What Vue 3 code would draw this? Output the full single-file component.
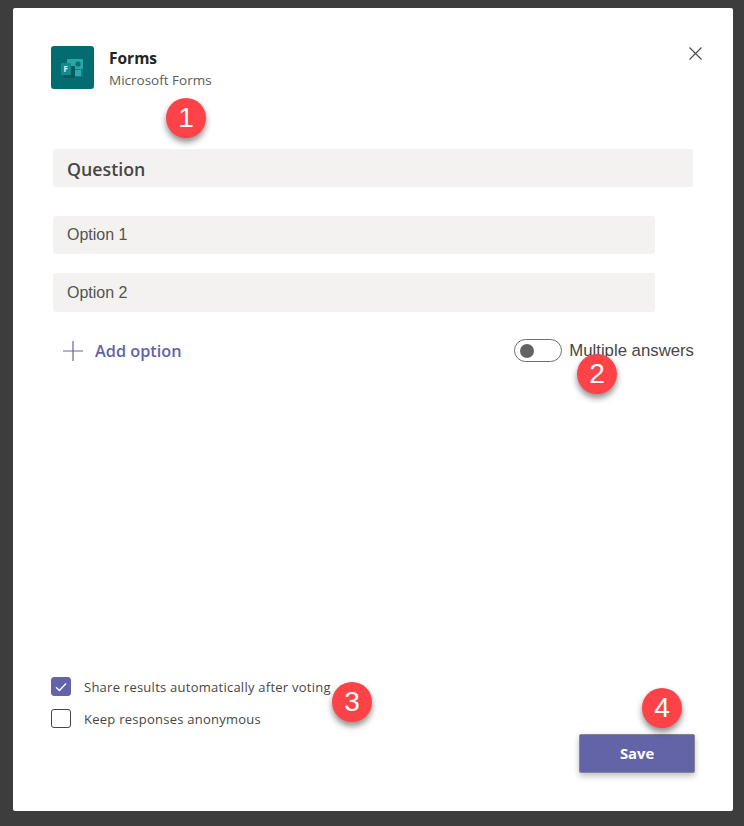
<template>
  <div class="page">
    <div class="dialog">
      <header class="head">
        <div class="app-icon">
          <svg width="43" height="43" viewBox="0 0 43 43">
            <rect x="16" y="13" width="16" height="18" rx="1" fill="#0b7f82" />
            <rect x="16" y="13" width="16" height="10" rx="1" fill="#28a6aa" />
            <circle cx="27" cy="18" r="2.6" fill="#0b6f72" />
            <rect x="24" y="24" width="6" height="6" fill="#2fa8ab" />
            <rect x="13" y="20" width="11" height="12" rx="1" fill="#07595c" />
            <rect x="10" y="17" width="10" height="12" rx="1" fill="#148a8d" />
            <text x="12.4" y="26" class="icon-letter">F</text>
          </svg>
        </div>
        <div class="titles">
          <div class="title">Forms</div>
          <div class="subtitle">Microsoft Forms</div>
        </div>
        <svg class="close" width="15" height="15" viewBox="0 0 15 15">
          <path d="M1.5 1.5 13.5 13.5M13.5 1.5 1.5 13.5" stroke="#4a4a4a" stroke-width="1.1" fill="none" />
        </svg>
      </header>

      <div class="field question">Question</div>
      <div class="field option first">Option 1</div>
      <div class="field option second">Option 2</div>

      <div class="tools">
        <div class="add">
          <svg width="20" height="20" viewBox="0 0 20 20">
            <path d="M10 0V20M0 10H20" stroke="#6264a7" stroke-width="1.2" fill="none" />
          </svg>
          <span>Add option</span>
        </div>
        <div class="multi">
          <span class="toggle"><i></i></span>
          <span>Multiple answers</span>
        </div>
      </div>

      <div class="foot">
        <div class="checks">
          <label class="check">
            <span class="box on">
              <svg width="12" height="10" viewBox="0 0 12 10">
                <path d="M1 5.2 4.4 8.5 11 1.5" stroke="#fff" stroke-width="1.3" fill="none" />
              </svg>
            </span>
            <span class="check-text">Share results automatically after voting</span>
          </label>
          <label class="check">
            <span class="box"></span>
            <span class="check-text">Keep responses anonymous</span>
          </label>
        </div>
        <button class="save">Save</button>
      </div>
    </div>

    <div v-for="b in badges" :key="b.n" class="badge" :style="{ left: b.x + 'px', top: b.y + 'px' }">{{ b.n }}</div>
  </div>
</template>

<script setup>
const badges = [
  { n: 1, x: 166, y: 98 },
  { n: 2, x: 577, y: 354 },
  { n: 3, x: 332, y: 682 },
  { n: 4, x: 642, y: 688 }
]
</script>

<style>
html, body {
  margin: 0;
  background: #3d3d3d;
}
</style>

<style scoped>
.page {
  position: relative;
  width: 744px;
  height: 826px;
  padding: 8px 11px 15px 13px;
  box-sizing: border-box;
  background: #3d3d3d;
  font-family: "Open Sans", "Noto Sans", sans-serif;
}

.dialog {
  height: 803px;
  background: #fff;
  border-radius: 2px;
  box-sizing: border-box;
  padding: 38px;
  display: flex;
  flex-direction: column;
}

.head {
  display: flex;
  align-items: flex-start;
  height: 43px;
  margin-bottom: 60px;
}

.app-icon {
  width: 43px;
  height: 43px;
  border-radius: 3px;
  background: #036c70;
  overflow: hidden;
  flex-shrink: 0;
}

.app-icon svg {
  display: block;
}

.icon-letter {
  font-family: "Open Sans", sans-serif;
  font-size: 8px;
  font-weight: 700;
  fill: #e6f6f6;
}

.titles {
  margin-left: 15px;
  padding-top: 2px;
}

.title {
  font-size: 15.5px;
  line-height: 20px;
  font-weight: 700;
  color: #252423;
}

.subtitle {
  font-size: 13.5px;
  line-height: 20px;
  margin-top: 2px;
  color: #5c5b5a;
}

.close {
  margin-left: auto;
  margin-right: -8px;
}

.field {
  background: #f3f2f1;
  border-radius: 3px;
  padding-left: 14px;
  margin-left: 2px;
  box-sizing: border-box;
  display: flex;
  align-items: center;
}

.question {
  width: 640px;
  height: 38px;
  padding-top: 1px;
  font-size: 17.8px;
  font-weight: 600;
  color: #484644;
}

.option {
  width: 602px;
  font-family: "Liberation Sans", Arial, sans-serif;
  font-size: 16px;
  color: #555350;
}

.first {
  height: 38px;
  margin-top: 29px;
}

.second {
  height: 39px;
  margin-top: 19px;
}

.tools {
  display: flex;
  align-items: center;
  justify-content: space-between;
  margin-top: 27px;
  height: 24px;
}

.add {
  display: flex;
  align-items: center;
  gap: 12px;
  margin-left: 12px;
  font-size: 16.3px;
  font-weight: 600;
  color: #6264a7;
}

.add svg {
  display: block;
}

.multi {
  display: flex;
  align-items: center;
  gap: 7px;
  font-family: "Liberation Sans", Arial, sans-serif;
  font-size: 16.75px;
  color: #484644;
  margin-top: -1px;
  margin-right: 1px;
}

.toggle {
  width: 48px;
  height: 23px;
  border: 1px solid #6e6e6e;
  border-radius: 12px;
  box-sizing: border-box;
  display: flex;
  align-items: center;
  padding-left: 5px;
}

.toggle i {
  width: 14px;
  height: 14px;
  border-radius: 50%;
  background: #636363;
}

.foot {
  margin-top: auto;
  display: flex;
  justify-content: space-between;
  align-items: flex-end;
}

.checks {
  display: flex;
  flex-direction: column;
  gap: 11px;
  margin-bottom: 44px;
}

.check {
  display: flex;
  align-items: center;
  gap: 13px;
  font-size: 13px;
  letter-spacing: 0.25px;
  line-height: 19px;
  color: #484644;
}

.check-text {
  padding-top: 2px;
}

.box {
  width: 20px;
  height: 19px;
  box-sizing: border-box;
  border: 1px solid #484644;
  border-radius: 3px;
  display: flex;
  align-items: center;
  justify-content: center;
}

.box.on {
  background: #6264a7;
  border-color: #6264a7;
}

.save {
  width: 116px;
  height: 39px;
  border: 1px solid #85858f;
  border-radius: 2px;
  background: #6264a7;
  color: #fff;
  font-family: inherit;
  font-size: 14.8px;
  font-weight: 700;
  box-shadow: 0 3px 6px rgba(0, 0, 0, 0.25);
  padding: 0 0 2px;
}

.badge {
  position: absolute;
  width: 40px;
  height: 40px;
  border-radius: 50%;
  background: #fd4347;
  color: #fff;
  font-family: "Liberation Sans", Arial, sans-serif;
  font-size: 28px;
  line-height: 40px;
  text-align: center;
  box-shadow: 0 4px 6px rgba(0, 0, 0, 0.45);
}
</style>
